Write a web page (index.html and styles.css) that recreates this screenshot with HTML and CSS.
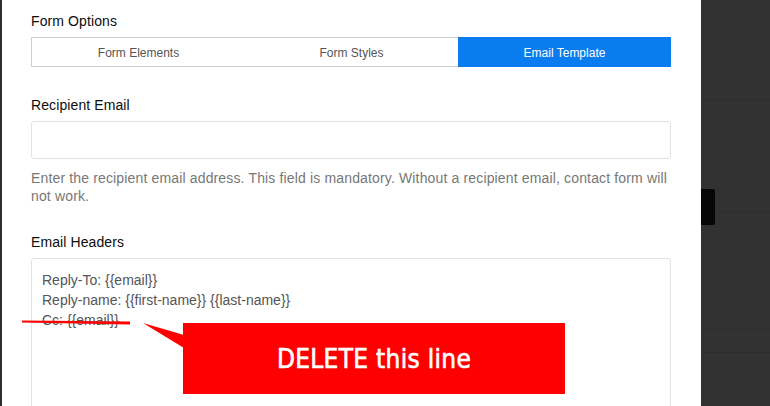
FILE: index.html
```html
<!DOCTYPE html>
<html>
<head>
<meta charset="utf-8">
<link rel="stylesheet" href="styles.css">
</head>
<body>
<div class="screen">
  <div class="edge"></div>
  <main class="panel">
    <h2 class="label first">Form Options</h2>
    <div class="tabs">
      <div class="tab">Form Elements</div>
      <div class="tab">Form Styles</div>
      <div class="tab active">Email Template</div>
    </div>

    <h2 class="label section">Recipient Email</h2>
    <div class="input"></div>
    <p class="help">Enter the recipient email address. This field is mandatory. Without a recipient email, contact form will not work.</p>

    <h2 class="label section2">Email Headers</h2>
    <div class="textarea">
      <div class="line">Reply-To: {{email}}</div>
      <div class="line">Reply-name: {{first-name}} {{last-name}}</div>
      <div class="line">Cc: {{email}}</div>
    </div>
  </main>
  <aside class="backdrop">
    <div class="band b1"></div>
    <div class="band b2"></div>
    <div class="band b3"></div>
    <div class="band b4"></div>
    <div class="band b5"></div>
    <div class="tabstub"></div>
  </aside>

  <svg class="marks" width="770" height="406" viewBox="0 0 770 406">
    <polygon points="22,320.6 130,321.4 130,324.4 22,322.4" fill="#f00"/>
    <polygon points="143,323 184,335 184,348" fill="#f00"/>
  </svg>
  <div class="callout">DELETE this line</div>
</div>
</body>
</html>
```

FILE: styles.css
```css
* { box-sizing: border-box; }
html, body { margin: 0; padding: 0; }
body {
  width: 770px;
  height: 406px;
  overflow: hidden;
  background: #fff;
  font-family: "Liberation Sans", Arial, sans-serif;
}
.screen {
  position: relative;
  display: flex;
  width: 770px;
  height: 406px;
}
.edge {
  width: 2px;
  background: #2d2d2d;
  flex: none;
}
.panel {
  width: 699px;
  flex: none;
  background: #fff;
  padding: 11px 30px 0 29px;
  overflow: hidden;
}
.label {
  margin: 0;
  font-size: 14px;
  font-weight: normal;
  line-height: 20px;
  letter-spacing: 0.1px;
  color: #0d0d0d;
}
.section { margin-top: 28px; }
.section2 { margin-top: 27px; }
.tabs {
  margin-top: 6px;
  display: grid;
  grid-template-columns: 1fr 1fr 1fr;
  border: 1px solid #d0d0d0;
  border-right: none;
  height: 30px;
}
.tab {
  display: flex;
  align-items: center;
  justify-content: center;
  font-size: 12px;
  color: #555;
  padding-top: 1px;
}
.tab.active {
  background: #0a7cf0;
  color: #fff;
  margin: -1px 0;
}
.input {
  margin-top: 6px;
  height: 38px;
  border: 1px solid #e3e3e3;
  border-radius: 3px;
}
.help {
  margin: 10px 0 0;
  font-size: 14px;
  line-height: 18px;
  letter-spacing: 0.15px;
  color: #777;
}
.textarea {
  margin-top: 6px;
  height: 170px;
  border: 1px solid #e3e3e3;
  border-radius: 3px;
  padding: 11px 10px;
  font-size: 14px;
  line-height: 20px;
  color: #555;
}
.backdrop {
  position: relative;
  flex: 1;
  display: flex;
  flex-direction: column;
  background: #323232;
}
.band { border-bottom: 1px solid #2d2d2d; flex: none; }
.b1 { height: 100px; }
.b2 { height: 113px; }
.b3 { height: 117px; }
.b4 { height: 23px; }
.b5 { flex: 1; border-bottom: none; }
.tabstub {
  position: absolute;
  left: 0;
  top: 189px;
  width: 14px;
  height: 36px;
  background: #070707;
  border-radius: 0 2px 2px 0;
}
.marks {
  position: absolute;
  left: 0;
  top: 0;
  pointer-events: none;
}
.callout {
  position: absolute;
  left: 183px;
  top: 323px;
  width: 382px;
  height: 71px;
  background: #f00;
  color: #fff;
  display: flex;
  align-items: center;
  justify-content: center;
  font-family: "DejaVu Sans Condensed", "DejaVu Sans", sans-serif;
  font-stretch: condensed;
  font-size: 26px;
  letter-spacing: 0.3px;
  -webkit-text-stroke: 0.6px #fff;
  padding-top: 1px;
}
```
